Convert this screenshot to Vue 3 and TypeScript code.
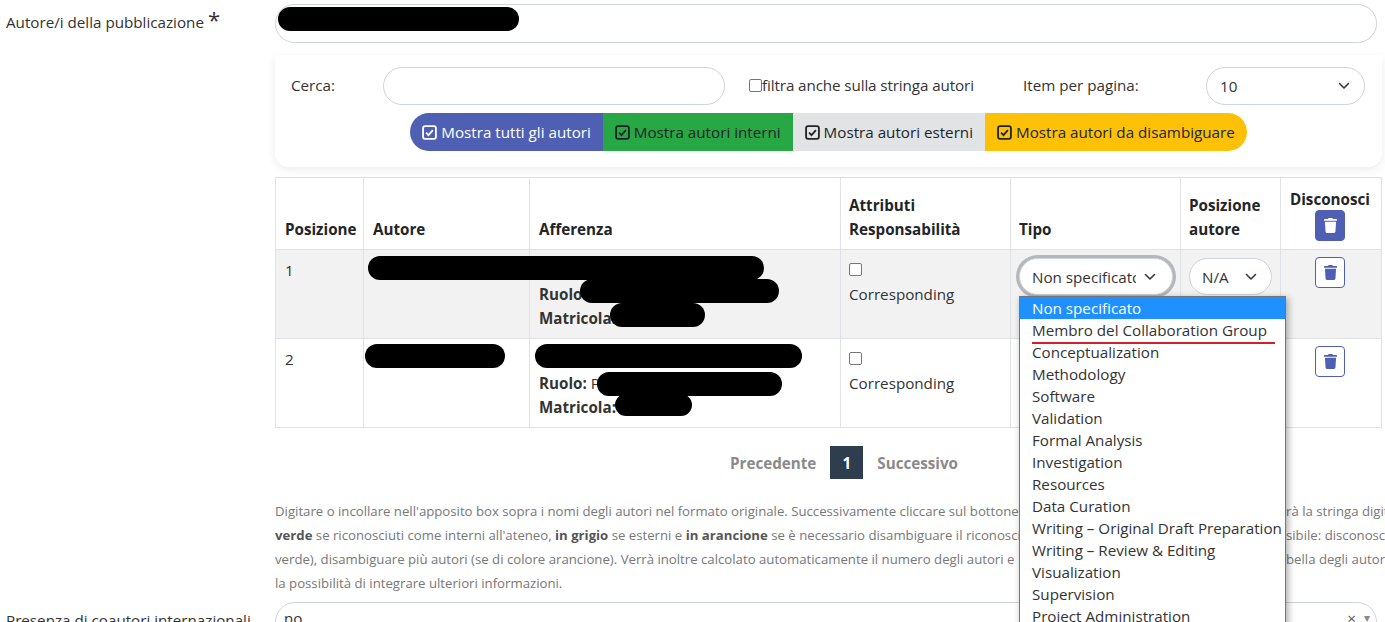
<script setup lang="ts">
const filters = [
  { label: 'Mostra tutti gli autori', cls: 'all' },
  { label: 'Mostra autori interni', cls: 'internal' },
  { label: 'Mostra autori esterni', cls: 'external' },
  { label: 'Mostra autori da disambiguare', cls: 'ambiguous' },
]

const roles = [
  'Non specificato',
  'Membro del Collaboration Group',
  'Conceptualization',
  'Methodology',
  'Software',
  'Validation',
  'Formal Analysis',
  'Investigation',
  'Resources',
  'Data Curation',
  'Writing – Original Draft Preparation',
  'Writing – Review & Editing',
  'Visualization',
  'Supervision',
  'Project Administration',
]

// black marks that hide personal data in the screenshot
const redactions = [
  { x: 278, y: 7, w: 241, h: 24 },
  { x: 368, y: 256, w: 396, h: 24 },
  { x: 580, y: 279, w: 199, h: 24 },
  { x: 610, y: 303, w: 95, h: 24 },
  { x: 365, y: 344, w: 140, h: 24 },
  { x: 535, y: 344, w: 267, h: 24 },
  { x: 597, y: 372, w: 185, h: 24 },
  { x: 615, y: 394, w: 77, h: 22 },
]

const trashPath =
  'M432 32H312l-9.4-18.7A24 24 0 0 0 281.1 0H166.8a23.72 23.72 0 0 0-21.4 13.3L136 32H16A16 16 0 0 0 0 48v32a16 16 0 0 0 16 16h416a16 16 0 0 0 16-16V48a16 16 0 0 0-16-16zM53.2 467a48 48 0 0 0 47.9 45h245.8a48 48 0 0 0 47.9-45L416 128H32z'
</script>

<template>
  <div class="page">
    <div class="form-row">
      <label class="form-label">Autore/i della pubblicazione <span class="req">*</span></label>
      <div class="form-field">
        <div class="pill-input author-input"></div>

        <div class="search-card">
          <div class="search-row">
            <span class="search-label">Cerca:</span>
            <div class="pill-input search-input"></div>
            <label class="string-filter"><span class="mini-check"></span>filtra anche sulla stringa autori</label>
            <span class="per-page-label">Item per pagina:</span>
            <div class="pill-input per-page">
              <span>10</span>
              <svg class="chevron" viewBox="0 0 12 8"><path d="M1.5 1.5 6 6l4.5-4.5" /></svg>
            </div>
          </div>
          <div class="filter-group">
            <button v-for="f in filters" :key="f.cls" class="filter-btn" :class="f.cls">
              <svg class="check-icon" viewBox="0 0 14 14">
                <rect x="1" y="1" width="12" height="12" rx="2" />
                <path d="M3.8 7.2 6 9.4l4.2-4.6" />
              </svg>
              {{ f.label }}
            </button>
          </div>
        </div>

        <table class="authors">
          <colgroup>
            <col style="width: 88px" />
            <col style="width: 166px" />
            <col style="width: 311px" />
            <col style="width: 170px" />
            <col style="width: 170px" />
            <col style="width: 100px" />
            <col style="width: 101px" />
          </colgroup>
          <thead>
            <tr>
              <th>Posizione</th>
              <th>Autore</th>
              <th>Afferenza</th>
              <th>Attributi<br />Responsabilità</th>
              <th>Tipo</th>
              <th>Posizione<br />autore</th>
              <th class="center">
                <div class="disown-title">Disconosci</div>
                <button class="trash-btn solid">
                  <svg viewBox="0 0 448 512"><path :d="trashPath" /></svg>
                </button>
              </th>
            </tr>
          </thead>
          <tbody>
            <tr class="shaded">
              <td>1</td>
              <td></td>
              <td class="affil">
                <div class="affil-name">&nbsp;</div>
                <div><b>Ruolo:</b></div>
                <div><b>Matricola:</b></div>
              </td>
              <td>
                <span class="mini-check big"></span>
                <div>Corresponding</div>
              </td>
              <td>
                <div class="pill-input cell-select focused">
                  <span class="clip">Non specificato</span>
                  <svg class="chevron" viewBox="0 0 12 8"><path d="M1.5 1.5 6 6l4.5-4.5" /></svg>
                </div>
              </td>
              <td>
                <div class="pill-input cell-select na">
                  <span class="clip">N/A</span>
                  <svg class="chevron" viewBox="0 0 12 8"><path d="M1.5 1.5 6 6l4.5-4.5" /></svg>
                </div>
              </td>
              <td class="center">
                <button class="trash-btn">
                  <svg viewBox="0 0 448 512"><path :d="trashPath" /></svg>
                </button>
              </td>
            </tr>
            <tr>
              <td>2</td>
              <td></td>
              <td class="affil">
                <div class="affil-name">&nbsp;</div>
                <div><b>Ruolo:</b> P</div>
                <div><b>Matricola:</b></div>
              </td>
              <td>
                <span class="mini-check big"></span>
                <div>Corresponding</div>
              </td>
              <td></td>
              <td></td>
              <td class="center">
                <button class="trash-btn">
                  <svg viewBox="0 0 448 512"><path :d="trashPath" /></svg>
                </button>
              </td>
            </tr>
          </tbody>
        </table>

        <div class="pager">
          <span>Precedente</span>
          <span class="current">1</span>
          <span>Successivo</span>
        </div>

        <div class="help">
          <div class="help-line">
            <span class="help-left">Digitare o incollare nell'apposito box sopra i nomi degli autori nel formato originale. Successivamente cliccare sul bottone</span>
            <span>rà la stringa digitata</span>
          </div>
          <div class="help-line">
            <span class="help-left"><b>verde</b> se riconosciuti come interni all'ateneo, <b>in grigio</b> se esterni e <b>in arancione</b> se è necessario disambiguare il riconoscimento</span>
            <span>sibile: disconoscere</span>
          </div>
          <div class="help-line">
            <span class="help-left">verde), disambiguare più autori (se di colore arancione). Verrà inoltre calcolato automaticamente il numero degli autori e</span>
            <span>bella degli autori</span>
          </div>
          <div class="help-line">la possibilità di integrare ulteriori informazioni.</div>
        </div>
      </div>
    </div>

    <div class="form-row intl">
      <label class="form-label">Presenza di coautori internazionali</label>
      <div class="form-field">
        <div class="pill-input intl-select">
          <span>no</span>
          <span class="intl-controls"><span class="clear">×</span><span class="caret">▾</span></span>
        </div>
      </div>
    </div>

    <div class="dropdown">
      <div v-for="(r, i) in roles" :key="r" class="option" :class="{ active: i === 0 }">{{ r }}</div>
      <div class="red-mark"></div>
    </div>

    <div
      v-for="(r, i) in redactions"
      :key="i"
      class="redaction"
      :style="{ left: r.x + 'px', top: r.y + 'px', width: r.w + 'px', height: r.h + 'px' }"
    ></div>
  </div>
</template>

<style>
html,
body {
  margin: 0;
  background: #fff;
  overflow: hidden;
}
</style>

<style scoped>
.page {
  position: relative;
  width: 1385px;
  height: 622px;
  overflow: hidden;
  font-family: 'Open Sans', 'Noto Sans', sans-serif;
  font-size: 15.2px;
  color: #333;
  background: #fff;
  padding-top: 4px;
  box-sizing: border-box;
}

.form-row {
  display: flex;
}

.form-label {
  flex: 0 0 275px;
  box-sizing: border-box;
  padding: 7px 0 0 6px;
  white-space: nowrap;
  line-height: 22px;
}

.req {
  font-size: 22px;
  line-height: 16px;
}

.form-field {
  flex: 0 0 1102px;
  min-width: 0;
}

.pill-input {
  box-sizing: border-box;
  border: 1px solid #ced4da;
  border-radius: 20px;
  background: #fff;
  display: flex;
  align-items: center;
  justify-content: space-between;
}

.author-input {
  height: 39px;
}

.search-card {
  width: 1107px;
  height: 112px;
  margin-top: 12px;
  box-sizing: border-box;
  padding-top: 12px;
  border-radius: 0 0 14px 14px;
  background: #fff;
  box-shadow: 0 3px 10px rgba(0, 0, 0, 0.08);
}

.search-row {
  display: flex;
  align-items: center;
  height: 38px;
}

.search-label {
  width: 108px;
  padding: 0 0 2px 16px;
  box-sizing: border-box;
}

.search-input {
  width: 342px;
  height: 38px;
}

.string-filter {
  margin-left: 24px;
  width: 274px;
  padding-bottom: 2px;
  display: flex;
  align-items: center;
  white-space: nowrap;
  letter-spacing: -0.1px;
}

.mini-check {
  display: inline-block;
  box-sizing: border-box;
  width: 13px;
  height: 13px;
  border: 1px solid #767676;
  border-radius: 2px;
  background: #fff;
}

.mini-check.big {
  display: block;
  margin: 5px 0 6px;
}

.per-page-label {
  width: 183px;
  padding-bottom: 2px;
}

.per-page {
  width: 159px;
  height: 38px;
  padding: 0 14px 0 13px;
}

.chevron {
  width: 12px;
  height: 8px;
  flex: none;
  fill: none;
  stroke: #343a40;
  stroke-width: 1.6;
  stroke-linecap: round;
  stroke-linejoin: round;
}

.filter-group {
  display: flex;
  justify-content: center;
  margin-top: 8px;
}

.filter-btn {
  height: 38px;
  border: 0;
  padding: 0 12px;
  font: inherit;
  display: flex;
  align-items: center;
  gap: 4px;
  white-space: nowrap;
  color: #212529;
}

.filter-btn.all {
  background: #4f5fb3;
  color: #fff;
  border-radius: 19px 0 0 19px;
}

.filter-btn.internal {
  background: #28a745;
}

.filter-btn.external {
  background: #e2e3e5;
}

.filter-btn.ambiguous {
  background: #ffc107;
  border-radius: 0 19px 19px 0;
}

.check-icon {
  width: 15px;
  height: 15px;
  fill: none;
  stroke: currentColor;
  stroke-width: 1.7;
}

.authors {
  width: 1106px;
  margin-top: 10px;
  border-collapse: collapse;
  table-layout: fixed;
  color: #333;
}

.authors th,
.authors td {
  border: 1px solid #dee2e6;
  padding: 8px 9px;
  text-align: left;
  vertical-align: top;
  line-height: 24px;
}

.authors th {
  vertical-align: bottom;
  height: 55px;
  color: #212529;
  white-space: nowrap;
}

.authors th:nth-child(n + 4),
.authors td:nth-child(n + 4) {
  padding-left: 8px;
}

.authors th.center,
.authors td.center {
  text-align: center;
  padding: 7px 2px 8px 0;
}

.authors tbody tr {
  height: 89px;
}

.shaded td {
  background: #f2f2f2;
}

.disown-title {
  line-height: 22px;
}

.trash-btn {
  width: 30px;
  height: 31px;
  padding: 0;
  box-sizing: border-box;
  border: 1px solid #4f5fb3;
  border-radius: 4px;
  background: #fff;
  display: inline-flex;
  align-items: center;
  justify-content: center;
  vertical-align: top;
}

.trash-btn svg {
  width: 13px;
  height: 15px;
  fill: #4f5fb3;
}

.trash-btn.solid {
  background: #4f5fb3;
}

.trash-btn.solid svg {
  fill: #fff;
}

.affil-name {
  height: 24px;
}

.cell-select {
  height: 37px;
  padding: 0 16px 0 12px;
  width: 154px;
  gap: 8px;
}

.cell-select.focused {
  box-shadow: 0 0 0 3px #b5b7bf;
}

.cell-select.na {
  width: 83px;
  padding-right: 14px;
  margin-right: -9px;
}

.clip {
  overflow: hidden;
  white-space: nowrap;
  flex: 1;
}

.pager {
  display: flex;
  justify-content: center;
  align-items: center;
  gap: 14px;
  margin-top: 18px;
  height: 33px;
  font-weight: 700;
  color: #8a8a8a;
  padding-left: 36px;
}

.current {
  width: 33px;
  height: 33px;
  display: flex;
  align-items: center;
  justify-content: center;
  background: #2e3e4e;
  color: #fff;
}

.help {
  margin-top: 20px;
  width: 1110px;
  font-size: 13.2px;
  line-height: 24px;
  color: #777;
}

.help-line {
  display: flex;
  white-space: nowrap;
}

.help-left {
  flex: 0 0 1011px;
  overflow: hidden;
}

.help b {
  color: #555;
}

.intl {
  margin-top: 7px;
}

.intl .form-label {
  padding-top: 7px;
}

.intl-select {
  height: 40px;
  padding: 4px 6px 0 8px;
  align-items: flex-start;
  line-height: 22px;
}

.intl-controls {
  display: flex;
  align-items: center;
  gap: 8px;
  color: #555;
}

.caret {
  color: #888;
  font-size: 12px;
}

.dropdown {
  position: absolute;
  left: 1019px;
  top: 296px;
  width: 267px;
  box-sizing: border-box;
  border: 1px solid #767676;
  background: #fff;
  box-shadow: 2px 2px 7px rgba(0, 0, 0, 0.35);
}

.option {
  height: 22px;
  line-height: 22px;
  padding-left: 12px;
  white-space: nowrap;
  color: #333;
}

.option.active {
  background: #1e90ff;
  color: #fff;
}

.red-mark {
  position: absolute;
  left: 12px;
  top: 45px;
  width: 243px;
  height: 2px;
  background: #d0202a;
}

.redaction {
  position: absolute;
  background: #000;
  border-radius: 12px;
}
</style>
